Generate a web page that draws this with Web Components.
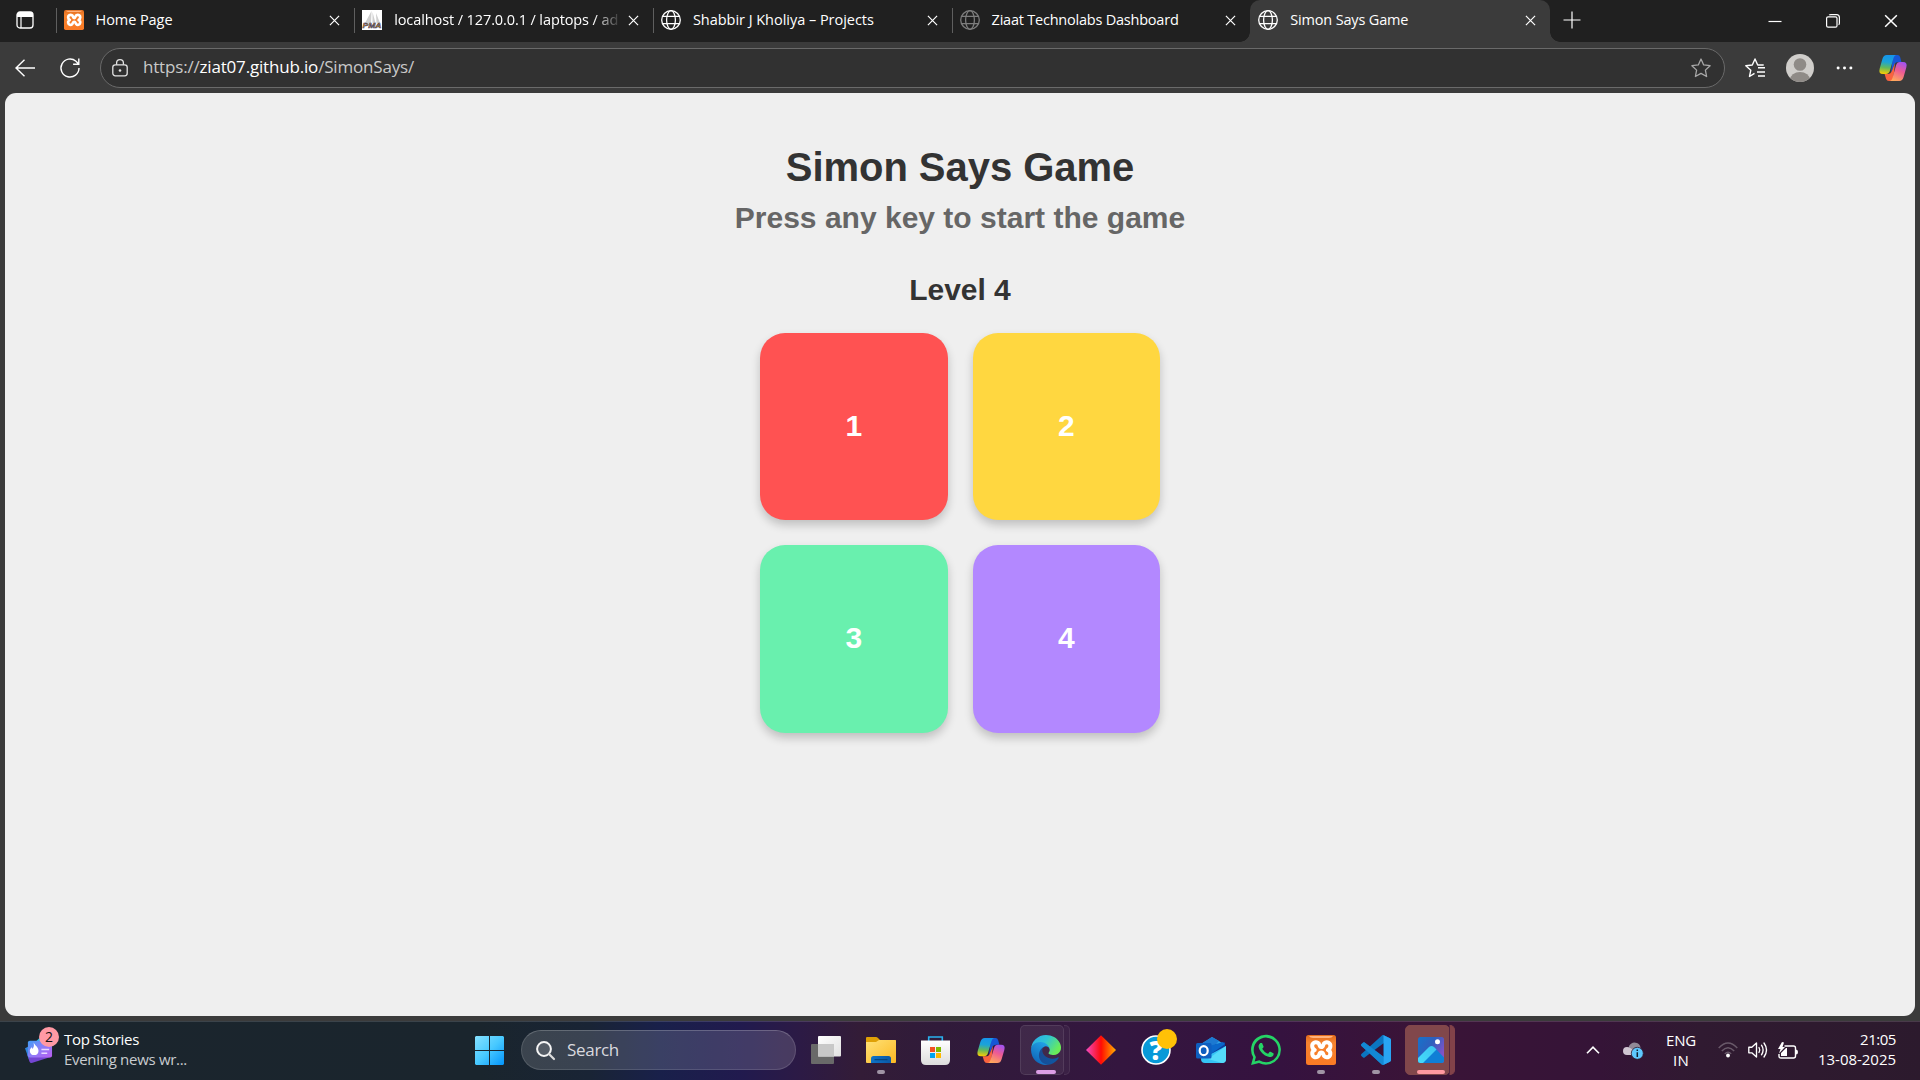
<!DOCTYPE html>
<html lang="en">
<head>
<meta charset="utf-8">
<title>Simon Says Game</title>
<style>
html,body{margin:0;height:100%;overflow:hidden;background:#3b3b3b}
body{font-family:"Open Sans","Noto Sans",sans-serif}
</style>
</head>
<body>
<desktop-screen></desktop-screen>
<script>
const ICONS = {
tabs:['0 0 18 18','<rect x="1" y="1" width="16" height="16" rx="3" fill="none" stroke="#fff" stroke-width="1.3"/><path d="M1 6V4a3 3 0 0 1 3-3h10a3 3 0 0 1 3 3v2z" fill="#fff"/><path d="M5 6v11" stroke="#fff" stroke-width="1.2"/>'],
xampp:['0 0 30 30','<defs><linearGradient id="g" x2="0" y2="1"><stop stop-color="#e06a1c"/><stop offset=".25" stop-color="#f5832f"/><stop offset="1" stop-color="#fb7a24"/></linearGradient></defs><rect width="30" height="30" rx="2.5" fill="url(#g)"/><path d="M3 1h24q-1 2-4 2H7Q4 3 3 1z" fill="#ffb27c"/><path d="M12 7.8C9 6.600 6.200 8 6.200 11c0 2 1.300 3.400 2.500 4-1.800.8-2.700 2.400-2.400 4.300.5 3.200 4.200 3.900 6 1.900 1.400-1.500.7-3.600 3-3.600s1.600 2.100 3 3.600c1.800 2 5.500 1.300 6-1.900.3-1.900-.6-3.500-2.400-4.300 1.200-.6 2.500-2 2.500-4 0-3-2.800-4.400-5.700-3.200-2 .9-1 4.300-3.400 4.300S14 8.700 12 7.800z" fill="none" stroke="#fff" stroke-width="4" stroke-linejoin="round"/>'],
pma:['0 0 20 20','<rect width="20" height="20" fill="#fff"/><path d="M9.500 1L3 13h6zM10.500 2l3 11h-3zM14 3l4 10h-3.500z" fill="#cfcfcf"/><text x="0.500" y="18" font-family="Liberation Sans" font-weight="700" font-style="italic" font-size="8" textLength="19" lengthAdjust="spacingAndGlyphs" fill="#f89c0e" stroke="#29366b" stroke-width=".5">PMA</text>'],
globe:['0 0 20 20','<g fill="none" stroke="currentColor" stroke-width="1.300"><circle cx="10" cy="10" r="9.300"/><ellipse cx="10" cy="10" rx="4.400" ry="9.300"/><path d="M1.700 6.300h16.600M1.700 13.700h16.600"/></g>'],
close:['0 0 12 12','<path d="M1 1l10 10M11 1L1 11" stroke="#fff" stroke-width="1.300"/>'],
plus:['0 0 18 18','<path d="M9 .5v17M.5 9h17" stroke="#fff" stroke-width="1.200"/>'],
min:['0 0 14 14','<path d="M.5 7.500h13" stroke="#fff" stroke-width="1.200"/>'],
restore:['0 0 14 14','<rect x=".6" y="2.800" width="10.400" height="10.400" rx="1.500" fill="none" stroke="#fff" stroke-width="1.200"/><path d="M3.200 1.200Q3.600.6 5 .6h5.500q2.900 0 2.900 2.900v5.500q0 1.400-.8 1.800" fill="none" stroke="#fff" stroke-width="1.200"/>'],
back:['0 0 20 18','<path d="M20 9H1M9.500.7L1 9l8.500 8.300" fill="none" stroke="#fff" stroke-width="1.400"/>'],
refresh:['0 0 20 20','<path d="M19 10A9 9 0 1 1 16 3.300L18.600 6M18.800.5v5.700h-5.700" fill="none" stroke="#fff" stroke-width="1.400"/>'],
lock:['0 0 16 18','<g fill="none" stroke="#e4e4e4" stroke-width="1.300"><rect x=".8" y="5.800" width="14.400" height="11" rx="2.500"/><path d="M4.600 5.800V4a3.400 3.400 0 0 1 6.800 0v1.800"/></g><circle cx="8" cy="11.500" r="1.300" fill="#e4e4e4"/>'],
star:['0 0 20 20','<path d="M10 1l2.700 5.900 6.400.8-4.700 4.400 1.200 6.400-5.600-3.100-5.600 3.100 1.200-6.400L.9 7.700l6.400-.8z" fill="none" stroke="#a8a8a8" stroke-width="1.300" stroke-linejoin="round"/>'],
favs:['0 0 20 20','<path d="M20 9.800H13M20 14H12M20 18h-7M9.500 15.400l-5 3.100 1.300-6.300L.8 7.700l6.500-.7L10 1l2.700 6h6" fill="none" stroke="#fff" stroke-width="1.400" stroke-linejoin="round"/>'],
avatar:['0 0 28 28','<defs><clipPath id="c"><circle cx="14" cy="14" r="14"/></clipPath></defs><g clip-path="url(#c)"><rect width="28" height="28" fill="#d0cecb"/><circle cx="14" cy="10.500" r="6.300" fill="#8f8b87"/><ellipse cx="14" cy="26" rx="10" ry="8" fill="#8f8b87"/></g>'],
dots:['0 0 16 4','<g fill="#fff"><circle cx="2" cy="2" r="1.400"/><circle cx="8" cy="2" r="1.400"/><circle cx="14" cy="2" r="1.400"/></g>'],
copilot:['0 0 28 26','<defs><linearGradient id="a" x1=".3" x2=".2" y2="1"><stop stop-color="#1695ea"/><stop offset=".35" stop-color="#1ba3d8"/><stop offset=".65" stop-color="#62b95c"/><stop offset="1" stop-color="#ffce00"/></linearGradient><linearGradient id="b" x1=".7" x2=".3" y2="1"><stop stop-color="#a353ee"/><stop offset=".45" stop-color="#ee5b93"/><stop offset="1" stop-color="#ffa95c"/></linearGradient></defs><path d="M14 0h4.500q2 0 2.700 2.300L22.400 7h-3.200q-3 0-4 3L12 18z" fill="#1756d6"/><path d="M14 26H10q-2.300 0-3-2.300L5.600 19h3.200q3 0 4-3L16 8z" fill="#f9633f"/><path d="M7.700 0H17q-1.700.4-2.500 3L11 15.600Q10 19 7 19H4Q-.8 19 .7 13.500L3.400 4Q4.500 0 7.700 0z" fill="url(#a)"/><path d="M20.300 26H11q1.700-.4 2.500-3L17 10.400Q18 7 21 7h3q4.800 0 3.300 5.500L24.600 22q-1.100 4-4.300 4z" fill="url(#b)"/>'],
news:['0 0 29 28','<defs><linearGradient id="n" x2="1" y2="1"><stop stop-color="#3f9df5"/><stop offset=".5" stop-color="#8d7df8"/><stop offset="1" stop-color="#ba5df0"/></linearGradient></defs><path d="M11 5l4-4h9l2 9z" fill="#24bde5"/><path d="M2 18l26 3-21 7q-2 0-2.500-2z" fill="#7446d2"/><path d="M0 12l4-2v14z" fill="#2f85dc"/><rect x="3" y="4" width="25" height="18" rx="2" fill="url(#n)"/><path d="M9 6c1 3 5 5 5 9 0 6-9 6-9 0 0-2 1-3 2-4l1 2q2-3 1-7z" fill="#fff"/><path d="M17 13.500h8M17 17.500h6" stroke="#ead9ff" stroke-width="1.800"/>'],
start:['0 0 29 29','<defs><linearGradient id="w" gradientUnits="userSpaceOnUse" x2="29" y2="29"><stop stop-color="#86e1ff"/><stop offset=".5" stop-color="#48c9ff"/><stop offset="1" stop-color="#0394fb"/></linearGradient></defs><path d="M1 0h13v14H0V1zM15 0h13l1 1v13H15zM0 15h14v14H1l-1-1zM15 15h14v13l-1 1H15z" fill="url(#w)"/>'],
search:['0 0 19 19','<circle cx="8" cy="8" r="6.900" fill="#fff2" stroke="#f5f5f5" stroke-width="2"/><path d="M13 13l5 5" stroke="#ddd" stroke-width="2.200" stroke-linecap="round"/>'],
taskview:['0 0 30 28','<defs><linearGradient id="t" x2="1" y2="1"><stop stop-color="#fff"/><stop offset="1" stop-color="#e1e1e1"/></linearGradient></defs><rect y="8" width="23" height="20" rx="1" fill="#696969"/><rect x="7" width="23" height="20.500" rx="1" fill="url(#t)"/><path d="M7 8h16v12.500H7z" fill="#c8c8c8"/>'],
explorer:['0 0 30 26','<defs><linearGradient id="e" x2="1" y2="1"><stop stop-color="#ffe177"/><stop offset="1" stop-color="#fcb922"/></linearGradient><linearGradient id="f"><stop stop-color="#0f74c7"/><stop offset="1" stop-color="#0a57a5"/></linearGradient></defs><path d="M0 7V1q0-1 1-1h9q1 0 2 1l2 2h15q1 0 1 1v4z" fill="#dfa006"/><path d="M0 5h10l3-2h16q1 0 1 1v21q0 1-1 1H1q-1 0-1-1z" fill="url(#e)"/><path d="M5 26v-4.500Q5 19 7.500 19h15q2.500 0 2.500 2.500V26z" fill="url(#f)"/><path d="M8.500 22.700h13" stroke="#053e72" stroke-width="1"/>'],
store:['0 0 29 29','<defs><linearGradient id="s" x2="0" y2="1"><stop stop-color="#fff"/><stop offset="1" stop-color="#dcdcdc"/></linearGradient></defs><path d="M7.700 6V1h13.600v5" fill="none" stroke="#29b1ee" stroke-width="1.600"/><path d="M0 4.500h29V24q0 5-5 5H5q-5 0-5-5z" fill="url(#s)"/><path d="M9 11h5v5H9z" fill="#f25022"/><path d="M15 11h5v5h-5z" fill="#7fba00"/><path d="M9 17h5v5H9z" fill="#00a4ef"/><path d="M15 17h5v5h-5z" fill="#ffb900"/>'],
edge:['0 0 256 256','<defs><linearGradient id="a" x1="0" x2="1"><stop stop-color="#1b4a92"/><stop offset="1" stop-color="#0c59a4"/></linearGradient><linearGradient id="b" x1=".8" x2=".3" y2="1"><stop stop-color="#23a9ec"/><stop offset="1" stop-color="#0f63b6"/></linearGradient><linearGradient id="c" x2="1" y2=".5"><stop stop-color="#2ba9e9"/><stop offset=".5" stop-color="#2fc3d5"/><stop offset="1" stop-color="#69ec59"/></linearGradient></defs><path d="M231 190.500c-3.400 1.800-6.900 3.400-10.500 4.700a101.700 101.700 0 0 1-35.900 6.500c-47.300 0-88.500-32.500-88.500-74.300A31.500 31.500 0 0 1 112.500 100c-42.800 1.800-53.800 46.400-53.800 72.500 0 74 68.100 81.400 82.800 81.400 7.900 0 19.800-2.300 27-4.600l1.300-.4a128.300 128.300 0 0 0 66.600-52.800 4 4 0 0 0-5.400-5.600z" fill="url(#a)"/><path d="M105.700 241.400a79.200 79.200 0 0 1-22.700-21.300 80.700 80.700 0 0 1 29.500-120c3.200-1.500 8.500-4.100 15.600-4a32.400 32.400 0 0 1 25.700 13 31.900 31.900 0 0 1 6.300 18.700c0-.2 24.500-79.600-80-79.600C36.200 48.200.2 89.900.2 126.400a130.200 130.200 0 0 0 12.100 56 128 128 0 0 0 156.400 67.100 75.500 75.500 0 0 1-63-8z" fill="url(#b)"/><path d="M152.300 148.900c-.8 1-3.300 2.500-3.300 5.700 0 2.600 1.700 5.200 4.700 7.300 14.500 10 41.700 8.700 41.700 8.700a59.600 59.600 0 0 0 30.300-8.300 61.400 61.400 0 0 0 30.500-52.900c.3-22.400-8-37.300-11.300-43.900C223.600 23.800 177.800 0 128 0A128 128 0 0 0 0 126.200c.5-36.500 36.800-66 80-66 3.500 0 23.500.3 42 10a72.600 72.600 0 0 1 30.900 29.300c6.100 10.600 7.200 24.100 7.200 29.500s-2.700 13.300-7.800 19.900z" fill="url(#c)"/>'],
diamond:['0 0 30 30','<defs><linearGradient id="d"><stop stop-color="#f34bc2"/><stop offset=".5" stop-color="#ff0a09"/><stop offset=".55" stop-color="#ff1c00"/><stop offset="1" stop-color="#ffb000"/></linearGradient></defs><path d="M15 .3L30 15 15 29.700 0 15z" fill="url(#d)"/>'],
help:['0 0 30 30','<circle cx="15" cy="15" r="14" fill="#0899d8" stroke="#fff" stroke-width="1.600"/><text x="15" y="24.500" text-anchor="middle" font-family="Open Sans" font-weight="800" font-size="26" fill="#fff">?</text>'],
outlook:['0 0 30 26','<path d="M5 7L16 0l12 7z" fill="#2fa4e7"/><path d="M5 7L16 0l7 4-12 13z" fill="#1c79d1"/><path d="M14 15L29 5v11L15 24z" fill="#0b3e9c"/><path d="M10 10l17-5 2 2-14 10z" fill="#0a67ca"/><path d="M5 17h10l15-8v13q0 4-4 4H9q-4 0-4-4z" fill="#35c4f5"/><path d="M12 22l18-13v13q0 4-4 4z" fill="#55dcfa"/><rect y="6" width="15.500" height="15.500" rx="1.500" fill="#0e5fc0"/><ellipse cx="7.700" cy="13.700" rx="4" ry="4.500" fill="none" stroke="#fff" stroke-width="2.200"/>'],
whatsapp:['0 0 24 24','<path fill="#25d366" d="M17.500 14.400c-.3-.15-1.760-.87-2.030-.97-.27-.1-.47-.15-.67.15-.2.3-.77.97-.94 1.160-.17.2-.35.220-.64.070-.3-.15-1.260-.46-2.390-1.470-.88-.79-1.480-1.760-1.650-2.060-.17-.3-.02-.46.130-.61.130-.13.300-.35.450-.52.150-.17.200-.3.300-.5.100-.2.050-.37-.03-.52-.07-.15-.67-1.610-.91-2.210-.24-.58-.49-.5-.67-.51h-.57c-.2 0-.52.070-.79.370-.27.300-1.040 1.020-1.040 2.480s1.070 2.880 1.210 3.070c.15.200 2.100 3.200 5.080 4.490.71.310 1.260.49 1.690.63.710.23 1.360.19 1.870.12.570-.09 1.760-.72 2.010-1.410.25-.69.250-1.290.170-1.410-.07-.13-.27-.2-.57-.35M12.050 21.800a9.870 9.870 0 0 1-5.030-1.380l-.36-.21-3.740.98 1-3.650-.24-.37A9.860 9.860 0 1 1 12.050 21.800m8.410-18.300A11.820 11.820 0 0 0 1.760 17.740L.06 24l6.300-1.650A11.900 11.900 0 0 0 20.460 3.500"/>'],
vscode:['0 0 24 24','<defs><clipPath id="v"><path d="M18 0h6v24h-6z"/></clipPath><path id="k" d="M23.150 2.587L18.210.21a1.494 1.494 0 0 0-1.705.29l-9.460 8.630-4.120-3.128a.999.999 0 0 0-1.276.057L.327 7.261A1 1 0 0 0 .326 8.740L3.899 12 .326 15.260a1 1 0 0 0 .001 1.479L1.650 17.940a.999.999 0 0 0 1.276.057l4.120-3.128 9.460 8.630a1.492 1.492 0 0 0 1.704.290l4.942-2.377A1.500 1.500 0 0 0 24 20.060V3.939a1.500 1.500 0 0 0-.850-1.352zm-5.146 14.861L10.826 12l7.178-5.448v10.896z"/></defs><use href="#k" fill="#0b75c1"/><path d="M18 23.600q-.8.500-1.500-.1L.4 8.800q-.6-.8 0-1.500l1.300-1.200q.6-.5 1.200-.1L18 17.450z" fill="#1389d4"/><use href="#k" clip-path="url(#v)" fill="#29a5f3"/>'],
photos:['0 0 26 26','<defs><linearGradient id="p" x2="1" y2=".6"><stop stop-color="#1673cb"/><stop offset=".5" stop-color="#2f5fbd"/><stop offset="1" stop-color="#8552c8"/></linearGradient><linearGradient id="q" x1="1" x2="0" y2="1"><stop stop-color="#3cc3f0"/><stop offset="1" stop-color="#45dcfb"/></linearGradient><clipPath id="r"><rect width="26" height="26" rx="2.500"/></clipPath></defs><g clip-path="url(#r)"><path d="M0 0h26v26H0z" fill="url(#p)"/><path d="M3 26L12 11q2.500-3 5 0l9 9.500V26z" fill="#0f7fd6"/><path d="M0 21L11 10q2.500-2.200 5 0l2.500 2.500L5 26H0z" fill="url(#q)"/></g><circle cx="19.500" cy="4.700" r="2.500" fill="#fff"/>'],
up:['0 0 14 8','<path d="M1 7.300L7 1.200l6 6.100" fill="none" stroke="#fff" stroke-width="1.600"/>'],
cloud:['0 0 20 17','<path d="M6 4q3-5 8-3 3 1 3.500 4.500L18 10 5 12z" fill="#918997"/><path d="M4 13q-4 0-4-4t4-4q2 0 3 1l6 3v4z" fill="#d0c6d2"/><circle cx="14.300" cy="11.300" r="6" fill="#5ec8ff" stroke="#301a30" stroke-width=".8"/><path d="M14.300 10.200v4.800M14.300 7.500v1.500" stroke="#123" stroke-width="1.500"/>'],
wifi:['0 0 20 16','<g fill="none" stroke="#fff" stroke-opacity=".28" stroke-width="1.400"><path d="M.7 6q9.300-10 18.600 0M3.800 9q6.200-6.600 12.400 0M6.800 11.900q3.200-3.500 6.400 0"/></g><circle cx="10" cy="13.500" r="1.900" fill="#fff"/>'],
sound:['0 0 20 18','<g fill="none" stroke="#fff" stroke-width="1.350" stroke-linecap="round" stroke-linejoin="round"><path d="M.8 6.200h3L8.500 2v14l-4.700-4.200h-3zM11 6.500q1.600 2.500 0 5M13.500 4.200q3.200 4.800 0 9.600M16 2q5 7 0 14"/></g>'],
battery:['0 0 20 17','<path d="M6.500 4h9q2 0 2 2v8q0 2-2 2H3q-2 0-2-2v-2" fill="none" stroke="#fff" stroke-width="1.400"/><path d="M18 7.500q2 0 2 2.500t-2 2.500zM3 14V11l5-5h1v8z" fill="#fff"/><path d="M4 0L0 7h2.500L1 11.500 7 5H4.500L6 .5z" fill="#fff"/>']
};
const define=(name,css,html,after)=>customElements.define(name,class extends HTMLElement{
  connectedCallback(){
    if(this.shadowRoot)return;
    const a=k=>this.getAttribute(k)||'';
    this.attachShadow({mode:'open'}).innerHTML='<style>'+css+'</style>'+(typeof html==='function'?html(a):html);
    if(after)after(this);
  }
});

define('ui-icon',':host{display:block;flex:none}svg{display:block;width:100%;height:100%;overflow:visible}',
  a=>`<svg viewBox="${ICONS[a('name')][0]}" preserveAspectRatio="none">${ICONS[a('name')][1]}</svg>`,
  el=>{el.style.width=el.getAttribute('w')+'px';el.style.height=(el.getAttribute('h')||el.getAttribute('w'))+'px';});

/* Text tracked so that its run measures the width given in "w". */
define('fit-text',':host{display:block;white-space:nowrap;flex:none;width:max-content}span{display:inline-block;white-space:nowrap}','<span><slot></slot></span>',
  el=>{const s=el.shadowRoot.querySelector('span'),n=el.textContent.length,d=+el.getAttribute('w')-s.getBoundingClientRect().width;
    s.style.letterSpacing=d/n+'px';});

define('browser-tab',`
:host{display:flex;box-sizing:border-box;width:298.700px;height:42px;flex:none;padding:0 14px 2px 8px;align-items:center;color:#fff;font-size:14.500px;line-height:20px}
:host::before{content:"";width:1px;height:25px;background:#5f5f5f;margin:0 7px 0 -8px}
.label{margin-left:12px;flex:1;min-width:0}
:host([fade]) .label{-webkit-mask-image:linear-gradient(90deg,#000 200px,transparent 228px)}
:host([dim]) .fav{color:#7d7d7d}
:host([active]){background:#3b3b3b;border-radius:10px 10px 0 0;width:300px;position:relative}
:host([active])::before{background:none}
:host([active])::after{content:"";position:absolute;left:-10px;right:-10px;bottom:0;height:10px;background:radial-gradient(circle at 0 0,transparent 9.500px,#3b3b3b 10px) left/10px 10px no-repeat,radial-gradient(circle at 10px 0,transparent 9.500px,#3b3b3b 10px) right/10px 10px no-repeat}
.x{margin-left:8px}`,
a=>`<ui-icon class="fav" name="${a('icon')}" w="20"></ui-icon><div class="label"><fit-text w="${a('w')}">${a('label')}</fit-text></div><ui-icon class="x" name="close" w="11"></ui-icon>`);

define('tab-strip',`
:host{display:flex;height:42px;background:#202020;padding-left:16px;align-items:center}
.tabs{display:flex;margin-left:21.500px}
.new{margin-left:12.500px;margin-bottom:2px}
.win{display:flex;gap:44px;margin-left:auto;padding-right:22px}`,
`<ui-icon name="tabs" w="18" style="margin-bottom:2px"></ui-icon>
<div class="tabs">
<browser-tab icon="xampp" label="Home Page" w="77"></browser-tab>
<browser-tab icon="pma" label="localhost / 127.0.0.1 / laptops / ad" w="224" fade></browser-tab>
<browser-tab icon="globe" label="Shabbir J Kholiya – Projects" w="181"></browser-tab>
<browser-tab icon="globe" label="Ziaat Technolabs Dashboard" w="187" dim></browser-tab>
<browser-tab icon="globe" label="Simon Says Game" w="118" active></browser-tab>
</div>
<ui-icon class="new" name="plus" w="18"></ui-icon>
<div class="win"><ui-icon name="min" w="14"></ui-icon><ui-icon name="restore" w="14"></ui-icon><ui-icon name="close" w="14"></ui-icon></div>`);

define('address-bar',`
:host{display:flex;height:51px;align-items:center;padding-left:15px;background:#3b3b3b;box-sizing:border-box}
.box{display:flex;align-items:center;box-sizing:border-box;width:1625px;height:40px;border:1px solid #6a6a6a;border-radius:20px;background:#313131;margin-left:20px;padding:0 13px 0 11px;color:#c9c9c9;font-size:17px;line-height:24px}
.url{margin-left:15px;flex:1;margin-bottom:1px}b{font-weight:400;color:#fff}`,
`<ui-icon name="back" w="20" h="18"></ui-icon><ui-icon name="refresh" w="20" style="margin-left:25px"></ui-icon>
<div class="box"><ui-icon name="lock" w="16" h="18"></ui-icon><div class="url"><fit-text w="271">https://<b>ziat07.github.io</b>/SimonSays/</fit-text></div><ui-icon name="star" w="20"></ui-icon></div>
<ui-icon name="favs" w="20" style="margin-left:20px"></ui-icon>
<ui-icon name="avatar" w="28" style="margin-left:21px"></ui-icon>
<ui-icon name="dots" w="17" h="4" style="margin-left:22px"></ui-icon>
<ui-icon name="copilot" w="28" h="26" style="margin-left:26px"></ui-icon>`);

define('simon-pad',`
:host{display:flex;align-items:center;justify-content:center;box-sizing:border-box;width:187.500px;height:187.500px;padding-bottom:1px;border-radius:25px;background:var(--pad);color:#fff;font-size:30px;font-weight:700;line-height:34px;box-shadow:0 5px 10px rgba(0,0,0,.2)}`,
'<slot></slot>');

define('simon-game',`
:host{display:flex;flex-direction:column;align-items:center;box-sizing:border-box;height:923px;margin:0 5px;padding-top:49px;background:#efefef;border-radius:11px;color:#333;font-family:"Liberation Sans",Arial,sans-serif;font-weight:700}
h1,h2,h3{margin:0;font-weight:700}
h1{font-size:40px;line-height:50px}
h2{font-size:30px;line-height:40px;margin-top:6px;color:#666}
h3{font-size:30px;line-height:40px;margin-top:32px}
.grid{display:grid;grid-template-columns:auto auto;gap:25px;margin-top:22.500px}`,
`<h1><fit-text w="348.500">Simon Says Game</fit-text></h1>
<h2><fit-text w="450.500">Press any key to start the game</fit-text></h2>
<h3><fit-text w="101.500">Level 4</fit-text></h3>
<div class="grid">
<simon-pad style="--pad:#ff5252">1</simon-pad><simon-pad style="--pad:#ffd740">2</simon-pad>
<simon-pad style="--pad:#69f0ae">3</simon-pad><simon-pad style="--pad:#b388ff">4</simon-pad></div>`);

define('task-app',`
:host{display:flex;box-sizing:border-box;width:55px;height:50px;align-items:center;justify-content:center;position:relative;flex:none}
.plate,.stack,.mark,.dot{display:none;position:absolute}
ui-icon{position:relative}
:host([running]) .mark{display:block;left:50%;margin-left:-4px;width:8px;height:4px;bottom:1px;border-radius:2px;background:#a094a5}
:host([wide]) .mark{width:20px;margin-left:-10px;background:#dc9ee6}
:host([wide]) .plate{display:block;left:2px;top:0;width:44px;height:50px;box-sizing:border-box;border:1px solid #ffffff18;border-radius:5px;background:#ffffff12}
:host([wide]) .stack{display:block;left:46px;top:0;width:6px;height:50px;box-sizing:border-box;border:1px solid #ffffff14;border-left:0;border-radius:0 5px 5px 0;background:#ffffff0b}
:host([hot]) .plate{background:#81474b;border-color:#81474b;width:45px}
:host([hot]) .stack{background:#814249;border-color:#814249;border-left:1px solid #54243f}
:host([hot]) .mark{width:28px;margin-left:-14px;background:#ff98a0}
:host([badge]) .dot{display:block;width:20px;height:20px;border-radius:50%;background:#ffc107;left:28.500px;top:4px}`,
a=>`<i class="plate"></i><i class="stack"></i><ui-icon name="${a('icon')}" w="${a('w')||30}" h="${a('h')||a('w')||30}"></ui-icon><i class="dot"></i><i class="mark"></i>`);

define('task-bar',`
:host{display:flex;box-sizing:border-box;height:59px;margin-top:5px;padding-bottom:2px;border-top:1px solid #ffffff24;align-items:center;color:#fff;background:linear-gradient(90deg,#1b252d 0,#1a252d 480px,#192435 590px,#19204a 660px,#211a4e 740px,#2c1a45 800px,#331c37 860px,#301b3a 940px,#34163f 1120px,#35123f 1280px,#3a1437 1420px,#351437 1600px,#301a31 1700px,#2c1a2d 1920px)}
.news{display:flex;width:475px;padding-left:25px;box-sizing:border-box;align-items:center;font-size:15px;line-height:20px;height:56px}
.news>div+div{margin-bottom:3px;margin-left:-1px}
.pic{position:relative;width:40px;height:26px}
.badge{position:absolute;left:14px;top:-10px;width:20px;height:20px;border-radius:50%;background:#ff99a4;color:#111;text-align:center;font-size:14px;line-height:20px}
.sub{color:#c9ccd0}
.search{display:flex;align-items:center;box-sizing:border-box;width:275px;height:40px;margin:0 2px 0 17px;border-radius:20px;border:1px solid #ffffff20;border-top-color:#ffffff35;background:rgba(255,255,255,.145);padding-left:14px;font-size:17px;line-height:24px;color:#d9d9df}
.apps{display:flex}
.tray{display:flex;align-items:center;margin-left:auto;font-size:15px;line-height:20px;padding-right:24px;height:56px}
.lang,.clock{display:flex;flex-direction:column}.lang{align-items:center;width:36px;margin:0 19px 0 20px}
.clock{align-items:flex-end;margin-left:20px;margin-bottom:3px}`,
`<div class="news"><div class="pic"><ui-icon name="news" w="28" h="26"></ui-icon><span class="badge">2</span></div>
<div><fit-text w="75">Top Stories</fit-text><fit-text class="sub" w="123">Evening news wr...</fit-text></div></div>
<ui-icon name="start" w="29"></ui-icon>
<div class="search"><ui-icon name="search" w="19"></ui-icon><fit-text w="52" style="margin-left:12px">Search</fit-text></div>
<div class="apps">
<task-app icon="taskview" w="30" h="28"></task-app>
<task-app icon="explorer" w="30" h="26" running></task-app>
<task-app icon="store" w="29"></task-app>
<task-app icon="copilot" w="28" h="25"></task-app>
<task-app icon="edge" running wide></task-app>
<task-app icon="diamond"></task-app>
<task-app icon="help" badge></task-app>
<task-app icon="outlook" w="30" h="26"></task-app>
<task-app icon="whatsapp"></task-app>
<task-app icon="xampp" running></task-app>
<task-app icon="vscode" running></task-app>
<task-app icon="photos" w="26" running wide hot></task-app>
</div>
<div class="tray"><ui-icon name="up" w="14" h="8"></ui-icon><ui-icon name="cloud" w="20" h="17" style="margin-left:23px"></ui-icon>
<div class="lang"><fit-text w="30">ENG</fit-text><fit-text w="16">IN</fit-text></div>
<ui-icon name="wifi" w="20" h="16"></ui-icon><ui-icon name="sound" w="20" h="18" style="margin-left:10px"></ui-icon><ui-icon name="battery" w="20" h="17" style="margin-left:10px"></ui-icon>
<div class="clock"><fit-text w="36">21:05</fit-text><fit-text w="78">13-08-2025</fit-text></div></div>`);

define('desktop-screen',':host{display:flex;flex-direction:column;width:1920px;height:1080px;overflow:hidden;background:#3b3b3b}',
'<tab-strip></tab-strip><address-bar></address-bar><simon-game></simon-game><task-bar></task-bar>');
</script>
</body>
</html>
